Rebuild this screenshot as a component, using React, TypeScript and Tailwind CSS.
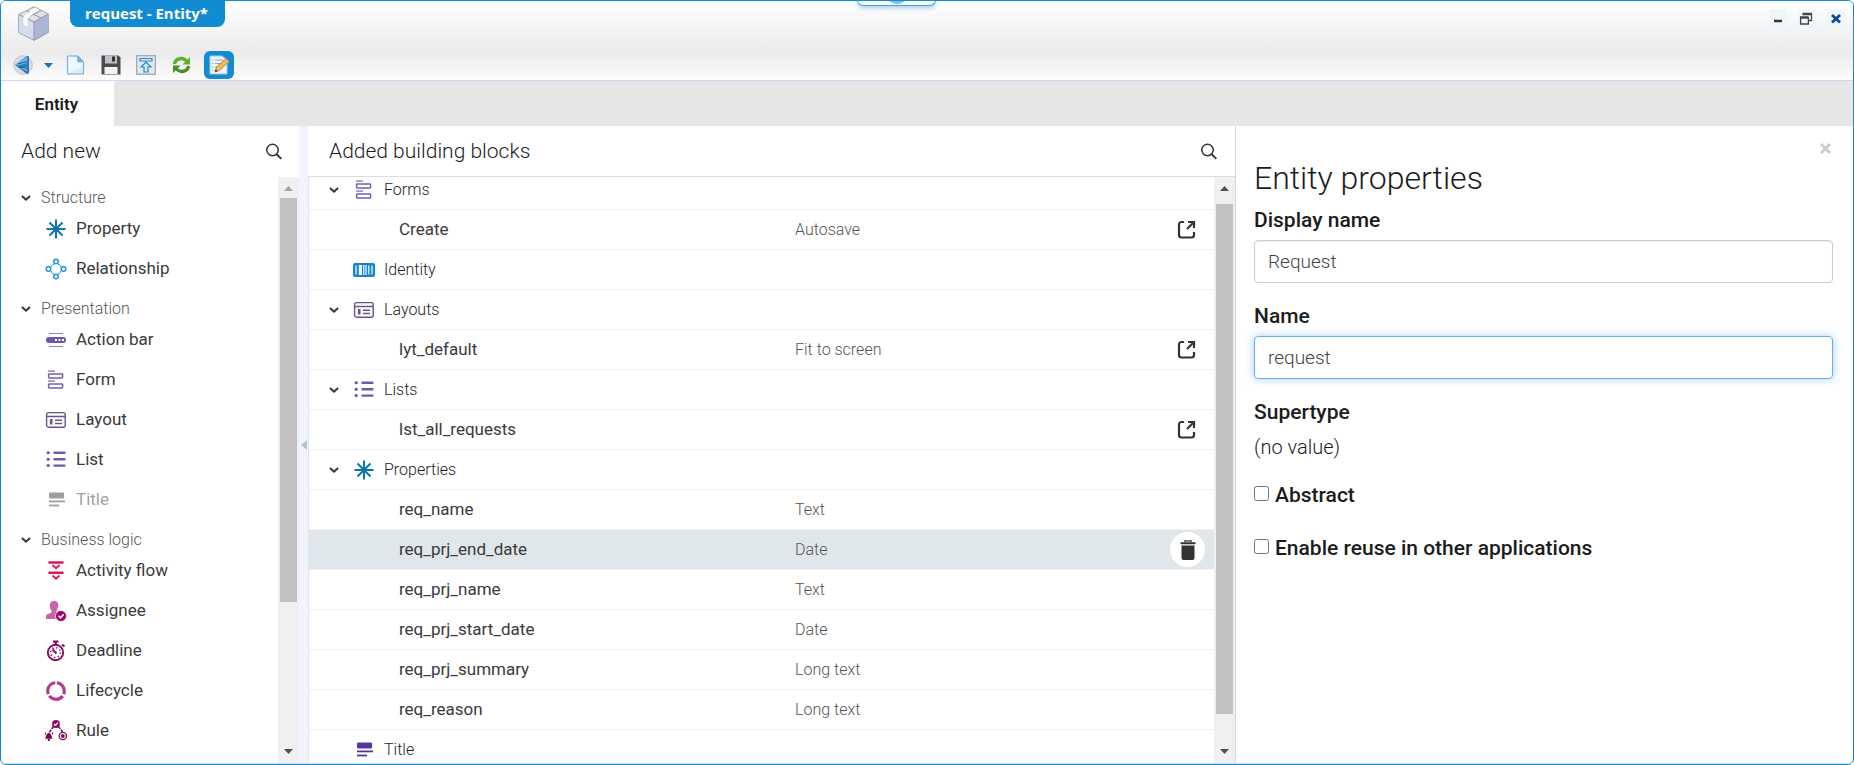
import React, { useState } from "react";

type IconName =
  | "property"
  | "relationship"
  | "actionbar"
  | "form"
  | "layout"
  | "list"
  | "title"
  | "titleMuted"
  | "flow"
  | "assignee"
  | "deadline"
  | "lifecycle"
  | "rule"
  | "identity";

type Block = {
  label: string;
  icon?: IconName;
  open?: boolean;
  detail?: string;
  link?: boolean;
};

const groups: { title: string; items: { label: string; icon: IconName; disabled?: boolean }[] }[] = [
  {
    title: "Structure",
    items: [
      { label: "Property", icon: "property" },
      { label: "Relationship", icon: "relationship" },
    ],
  },
  {
    title: "Presentation",
    items: [
      { label: "Action bar", icon: "actionbar" },
      { label: "Form", icon: "form" },
      { label: "Layout", icon: "layout" },
      { label: "List", icon: "list" },
      { label: "Title", icon: "titleMuted", disabled: true },
    ],
  },
  {
    title: "Business logic",
    items: [
      { label: "Activity flow", icon: "flow" },
      { label: "Assignee", icon: "assignee" },
      { label: "Deadline", icon: "deadline" },
      { label: "Lifecycle", icon: "lifecycle" },
      { label: "Rule", icon: "rule" },
    ],
  },
];

const blocks: Block[] = [
  { label: "Forms", icon: "form", open: true },
  { label: "Create", detail: "Autosave", link: true },
  { label: "Identity", icon: "identity" },
  { label: "Layouts", icon: "layout", open: true },
  { label: "lyt_default", detail: "Fit to screen", link: true },
  { label: "Lists", icon: "list", open: true },
  { label: "lst_all_requests", link: true },
  { label: "Properties", icon: "property", open: true },
  { label: "req_name", detail: "Text" },
  { label: "req_prj_end_date", detail: "Date" },
  { label: "req_prj_name", detail: "Text" },
  { label: "req_prj_start_date", detail: "Date" },
  { label: "req_prj_summary", detail: "Long text" },
  { label: "req_reason", detail: "Long text" },
  { label: "Title", icon: "title" },
];

function BlockIcon({ name }: { name: IconName }) {
  return (
    <svg width="22" height="22" viewBox="0 0 22 22" fill="none" className="shrink-0">
      {name === "property" && (
        <g stroke="#0b76ad" strokeWidth="2">
          <path d="M11 1.5v19M1.5 11h19" />
          <path d="M4.5 4.5l13 13M17.5 4.5l-13 13" />
        </g>
      )}
      {name === "relationship" && (
        <g stroke="#2394d2" strokeWidth="1.5">
          <circle cx="11" cy="3.5" r="2.3" />
          <circle cx="11" cy="18.5" r="2.3" />
          <circle cx="3.5" cy="11" r="2.3" />
          <circle cx="18.5" cy="11" r="2.3" />
          <path d="M6 8.5l2.5-2.5M13.5 6l2.5 2.5M6 13.5l2.5 2.5M13.5 16l2.5-2.5" strokeDasharray="1.3 1" />
        </g>
      )}
      {name === "actionbar" && (
        <g>
          <path d="M4 4.5h14M4 17.5h14" stroke="#9482c4" strokeWidth="1.2" />
          <rect x="1" y="8" width="20" height="6" rx="3" fill="#6d55a7" />
          <path d="M10 10h2v2h-2zM13.5 10h2v2h-2zM17 10h2v2h-2z" fill="#fff" />
        </g>
      )}
      {name === "form" && (
        <g stroke="#7460ae" strokeWidth="1.5">
          <path d="M3 2.2h7M3 12.2h7" stroke="#a294cd" strokeWidth="1.8" />
          <rect x="3.6" y="4.9" width="14" height="4" rx="0.6" />
          <rect x="3.6" y="14.9" width="14" height="4" rx="0.6" />
        </g>
      )}
      {name === "layout" && (
        <g stroke="#66558f" strokeWidth="1.4">
          <rect x="1.6" y="3.6" width="18.6" height="14.6" rx="2" />
          <path d="M1.6 7.5h18.6M10 11.2h7M10 14.5h7" />
          <path d="M6.2 10v5.5" strokeWidth="2.6" />
        </g>
      )}
      {name === "list" && (
        <g stroke="#7059ab" strokeWidth="2.4" strokeLinecap="round">
          <path d="M9.5 3.8h10M9.5 10.2h10M9.5 16.6h10" />
          <path d="M3 3.8h.4M3 10.2h.4M3 16.6h.4" strokeWidth="3" />
        </g>
      )}
      {(name === "title" || name === "titleMuted") && (
        <g fill={name === "title" ? "#55389a" : "#9e9e9e"}>
          <rect x="4" y="3.5" width="15" height="6" rx="1" />
          <rect x="4" y="11.5" width="16" height="1.8" />
          <rect x="4" y="15.6" width="10" height="1.8" />
        </g>
      )}
      {name === "flow" && (
        <g stroke="#e3125d">
          <path d="M4.5 2.5h13M4.500 12.800h13" strokeWidth="2.6" strokeLinecap="round" />
          <path d="M7.500 5l3.500 3.200L14.500 5M7.500 15.500l3.500 3.200L14.500 15.500" strokeWidth="1.800" />
        </g>
      )}
      {name === "assignee" && (
        <g>
          <path
            d="M9 1c3 0 4.600 2 4.300 5-.2 2-1 3.300-1.800 4.200v2l5 2.500V19H1v-2.500c0-2 1.500-2.500 3-3l2.500-1.300v-2C5.500 9.200 4.900 8 4.700 6 4.400 3 6 1 9 1z"
            fill="#c964ab"
          />
          <circle cx="16" cy="16" r="5.500" fill="#96056a" stroke="#fff" strokeWidth="0.8" />
          <path d="M13.500 15.800l2 2 3.200-3.500" stroke="#fff" strokeWidth="1.500" />
        </g>
      )}
      {name === "deadline" && (
        <g stroke="#86085f">
          <circle cx="10.500" cy="12.500" r="7.700" strokeWidth="1.900" />
          <path d="M8 1.500h5.500M10.700 2v3M17 4.500l2.500 2" strokeWidth="2.200" />
          <circle cx="10.500" cy="12.500" r="4.900" strokeWidth="1.500" strokeDasharray="1.300 2.550" />
          <path d="M7.500 9.500l4 4" strokeWidth="2" />
        </g>
      )}
      {name === "lifecycle" && (
        <circle
          cx="11"
          cy="11"
          r="8.300"
          stroke="#b03a8c"
          strokeWidth="3.200"
          strokeDasharray="15.380 2"
          transform="rotate(-84 11 11)"
        />
      )}
      {name === "rule" && (
        <g>
          <path d="M8.500 6.500l-5 7M13.500 6.500l4 5.500" stroke="#86085f" strokeWidth="1.500" strokeDasharray="3 1" />
          <circle cx="11" cy="4" r="3.900" fill="#86085f" />
          <path d="M9 4l1.500 1.500L13 2.700" stroke="#fff" strokeWidth="1.200" />
          <path d="M0 18.800c1.300-1 .5-5.500 3.800-5.800 3.300.3 2.500 4.800 3.800 5.800zM2.800 19h2v2h-2z" fill="#6d0a50" />
          <path d="M.5 12.500v2M7.500 12.500v2" stroke="#86085f" />
          <circle cx="17.800" cy="16" r="3.600" stroke="#86085f" strokeWidth="1.300" />
          <circle cx="17.800" cy="16" r="1.900" fill="#86085f" />
        </g>
      )}
      {name === "identity" && (
        <g>
          <rect x="0" y="4" width="22" height="14" rx="2" fill="#0f86cd" />
          <path d="M3 6.500v9M10.800 6v10M13 6v10M15.800 6.500v9M19 6.500v9" stroke="#fff" strokeWidth="1.200" />
          <path d="M5.800 6h3.200v10H5.800z" fill="#fff" />
        </g>
      )}
    </svg>
  );
}

function Chevron() {
  return (
    <svg width="10" height="10" viewBox="0 0 10 10" className="shrink-0">
      <path d="M1 3l4 3.800L9 3" fill="none" stroke="#333" strokeWidth="1.900" />
    </svg>
  );
}

function SearchButton() {
  return (
    <button aria-label="Search" className="cursor-pointer">
      <svg width="18" height="18" viewBox="0 0 18 18" fill="none" stroke="#333">
        <circle cx="7.500" cy="7" r="5.700" strokeWidth="1.500" />
        <path d="M11.500 11l4.800 4.800" strokeWidth="1.900" />
      </svg>
    </button>
  );
}

function ScrollBar({ muted, gap, size }: { muted?: boolean; gap: string; size: string }) {
  return (
    <div className="flex w-[21px] shrink-0 flex-col items-center bg-[#f0f0f0]">
      <div className={`flex shrink-0 justify-center pt-[9px] ${gap}`}>
        <svg width="9" height="5" viewBox="0 0 9 5">
          <path d="M0 5L4.500 0L9 5z" fill={muted ? "#a3a3a3" : "#505050"} />
        </svg>
      </div>
      <div className={`w-[17px] bg-[#c1c1c1] ${size}`} />
      <div className="mt-auto flex h-6 items-center">
        <svg width="9" height="5" viewBox="0 0 9 5">
          <path d="M0 0h9L4.500 5z" fill="#505050" />
        </svg>
      </div>
    </div>
  );
}

function Header() {
  return (
    <header className="relative h-20 shrink-0 border-b border-[#c6daf0] bg-linear-to-b from-white via-[#ebebeb] via-65% to-[#fcfcfc]">
      <div className="flex h-[47px] items-start">
        <svg width="34" height="38" viewBox="0 0 34 38" className="ml-4 mt-1">
          <path d="M2 9.500L17 2l14 7v18.500L17 35 2 27.500z" fill="#d9dfee" stroke="#7d8494" strokeWidth="1.200" />
          <path d="M2 9.500L17 17v18L2 27.500z" fill="#d5dcf0" />
          <path d="M31 9L17 17v18l14-7.500z" fill="#a9b6d8" />
          <path d="M2 9.500L17 2l14 7-14 8z" fill="#dfe1e6" />
          <path d="M2 9.500L17 17l14-8M17 17v18M9.500 5.800L24 13M24 5.500L9.500 13.200" fill="none" stroke="#8f96a6" />
          <path d="M6.500 11.500l4 2v8l-4-2zM18 2.500l4 2L10.500 13.500l-4-2z" fill="#fff" />
        </svg>
        <h1 className="ml-[19px] h-[26px] rounded-b-lg bg-[#118bd1] pl-[15px] pr-[17px] font-['Open_Sans',sans-serif] text-[15px]/[25px] font-bold text-white">
          request - Entity*
        </h1>
        <div className="ml-auto mr-2 mt-2 flex gap-[11px]">
          <button aria-label="Minimize" className="flex size-[18px] items-center justify-center bg-[#eff7fc]">
            <svg width="18" height="18"><path d="M5 12h8" stroke="#333" strokeWidth="2.500" /></svg>
          </button>
          <button aria-label="Restore" className="flex size-[18px] items-center justify-center bg-[#eff7fc]">
            <svg width="18" height="18" fill="none" stroke="#444">
              <path d="M2 8.500h8.500M4.500 5h9.500" strokeWidth="2.400" />
              <path d="M2.600 8v7h7.800V8M13.500 5v6.500h-3" strokeWidth="1.300" />
            </svg>
          </button>
          <button aria-label="Close" className="flex size-[18px] items-center justify-center bg-[#eff7fc]">
            <svg width="18" height="18"><path d="M5 6l8 7.500M13 6l-8 7.500" stroke="#0c4a91" strokeWidth="2.800" /></svg>
          </button>
        </div>
      </div>
      <div className="absolute left-1/2 -top-px flex h-1.5 w-[79px] -translate-x-[70px] justify-center overflow-hidden rounded-b-md border border-t-0 border-[#3ea6e4] bg-white shadow-[0_2px_5px_#9fcbe9]">
        <div className="-mt-3.5 h-[18px] w-5 shrink-0 rounded-full bg-[#7cc3f3]" />
      </div>
      <Toolbar />
    </header>
  );
}

function Toolbar() {
  return (
    <div className="flex h-[34px] items-center pl-3">
      <button aria-label="Back">
        <svg width="20" height="20" viewBox="0 0 20 20">
          <circle cx="10" cy="10" r="9.300" fill="#d5dce4" stroke="#bdc6cf" />
          <path d="M2 10L14 1l2 .5v17l-2 .5z" fill="#2b7dbc" />
          <path d="M3 9.500L14 2v6L5 10.500zM7 13l7-1v4z" fill="#75bce8" />
          <path d="M5 9l9-2.500M6 12l9 1.500" stroke="#15568f" />
        </svg>
      </button>
      <button aria-label="History" className="ml-[11px]">
        <svg width="9" height="5"><path d="M0 0h9L4.500 5z" fill="#1473b8" /></svg>
      </button>
      <button aria-label="New" className="ml-[13px]">
        <svg width="19" height="20" viewBox="0 0 20 20">
          <path d="M1.500.5h11l6 6v13h-17z" fill="#d6edfc" stroke="#6aa9d6" />
          <path d="M3 2h9v6h5v4L3 18z" fill="#effaff" />
          <path d="M12.500.5v6h6z" fill="#7fb5dc" stroke="#6aa9d6" />
        </svg>
      </button>
      <button aria-label="Save" className="ml-4">
        <svg width="20" height="20" viewBox="0 0 20 20">
          <path d="M.5.500h17l2 2v17H.5z" fill="#4c4c50" />
          <path d="M4 .500h12v8H4z" fill="#bfc2c9" />
          <path d="M11 1.500h3v5h-3z" fill="#333" />
          <path d="M3.500 12h13v7h-13z" fill="#f3f3f3" />
        </svg>
      </button>
      <button aria-label="Publish" className="ml-[15px]">
        <svg width="20" height="20" viewBox="0 0 20 20">
          <rect x=".7" y=".7" width="18.600" height="18.600" fill="#e4e9f0" stroke="#a5adb9" strokeWidth="1.400" />
          <path d="M4 3.500h12v2.500H4zM10 7l5 5h-3v5H8v-5H5z" fill="#cfeafd" stroke="#2b86c4" strokeWidth="1.200" />
        </svg>
      </button>
      <button aria-label="Refresh" className="ml-4">
        <svg width="19" height="18" viewBox="0 0 19 18" fill="none">
          <path d="M2.500 8C3.500 2 11 1 14.500 5" stroke="#5cb02c" strokeWidth="3.400" />
          <path d="M18 1v7.500h-7.500z" fill="#5cb02c" />
          <path d="M16.500 10c-1 6-8.500 7-12 3" stroke="#44921d" strokeWidth="3.400" />
          <path d="M1 17V9.500h7.500z" fill="#44921d" />
        </svg>
      </button>
      <button aria-label="Edit" aria-pressed="true" className="ml-[13px] flex h-7 w-[30px] items-center justify-center rounded-md bg-[#118bd1]">
        <svg width="21" height="20" viewBox="0 0 21 20">
          <path d="M1 1h12l5 4v14H1z" fill="#eaf5fc" stroke="#a4cce8" />
          <path d="M3 5h1.500M6 5h8M3 8.500h1.500M6 8.500h7M3 12h1.500M6 12h4M3 15.500h1.500" stroke="#8eaac2" />
          <path d="M6 17l1.500-5L17 3.500l3.200 3L10.500 15.500z" fill="#f5bd4b" stroke="#9d722b" strokeWidth=".8" />
          <path d="M17 3.500l3.200 3-2 1.800-3.200-3z" fill="#e9a29a" />
          <path d="M6 17l.8-2.500 1.700 1.700z" fill="#333" />
        </svg>
      </button>
    </div>
  );
}

function AddNewPanel() {
  return (
    <aside className="flex w-[298px] shrink-0 flex-col">
      <div className="flex h-[51px] shrink-0 items-center justify-between pl-5 pr-4 pt-px">
        <h2 className="text-[21px]">Add new</h2>
        <SearchButton />
      </div>
      <div className="flex min-h-0 grow">
        <div className="grow overflow-hidden pt-px">
          {groups.map((group) => (
            <section key={group.title}>
              <button className="flex h-[31px] w-full items-center gap-[10px] pl-5 pt-[9px] text-base/5 text-[#555]">
                <Chevron />
                {group.title}
              </button>
              {group.items.map((item) => (
                <button
                  key={item.label}
                  disabled={item.disabled}
                  className={`flex h-10 w-full items-center gap-[9px] pl-11 text-[17px] font-normal ${
                    item.disabled ? "text-[#a3a3a3]" : "text-[#3a3a3a]"
                  }`}
                >
                  <BlockIcon name={item.icon} />
                  {item.label}
                </button>
              ))}
            </section>
          ))}
        </div>
        <ScrollBar muted gap="h-[21px]" size="h-[69%]" />
      </div>
    </aside>
  );
}

function BuildingBlocks() {
  const [selected, setSelected] = useState("req_prj_end_date");

  return (
    <main className="flex min-w-0 flex-[3] flex-col">
      <div className="flex h-[51px] shrink-0 items-center justify-between border-b border-[#dcdcdc] pl-[21px] pr-[17px] pt-px">
        <h2 className="text-[21px]">Added building blocks</h2>
        <SearchButton />
      </div>
      <div className="flex min-h-0 grow overflow-hidden border-l border-[#e4e4e4]">
        <ul className="-mt-[7px] grow">
          {blocks.map((block) => (
            <li
              key={block.label}
              onClick={() => setSelected(block.label)}
              className={`grid h-10 grid-cols-[1fr_365px_54px] items-center border-b border-[#f2f2f2] ${
                selected === block.label ? "bg-[#dfe7ea]" : ""
              }`}
            >
              {block.icon ? (
                <div className="flex items-center pl-5 text-base">
                  <span className="w-6">{block.open && <Chevron />}</span>
                  <BlockIcon name={block.icon} />
                  <span className="ml-[9px]">{block.label}</span>
                </div>
              ) : (
                <span className="pl-[90px] text-[17px] font-normal text-[#3a3a3a]">{block.label}</span>
              )}
              <span className="text-base text-[#555]">{block.detail}</span>
              {block.link && (
                <button aria-label={`Open ${block.label}`} className="ml-[17px]">
                  <svg width="20" height="20" viewBox="0 0 20 20" fill="none" stroke="#333" strokeWidth="2.200">
                    <path d="M7 2H4.500A2.500 2.500 0 0 0 2 4.500v10.500a2.500 2.500 0 0 0 2.500 2.500H14.500a2.500 2.500 0 0 0 2.500-2.500V12" />
                    <path d="M11 2h6v6M16.500 2.500l-6.500 6.500" />
                  </svg>
                </button>
              )}
              {selected === block.label && (
                <button aria-label={`Delete ${block.label}`} className="ml-2.5 flex size-[35px] items-center justify-center rounded-full bg-white">
                  <svg width="16" height="20" viewBox="0 0 16 20">
                    <path d="M5 2.500V.800h6v1.700" fill="none" stroke="#333" strokeWidth="1.300" />
                    <path d="M.5 2.200h15v2H.5zM1.500 5.500h13V18a2 2 0 0 1-2 2h-9a2 2 0 0 1-2-2z" fill="#333" />
                  </svg>
                </button>
              )}
            </li>
          ))}
        </ul>
        <ScrollBar gap="h-[27px]" size="h-[87%]" />
      </div>
    </main>
  );
}

function PropertiesPanel() {
  const [displayName, setDisplayName] = useState("Request");
  const [name, setName] = useState("request");

  return (
    <div className="min-w-0 flex-[2]">
      <section className="flex h-full flex-col border-l border-[#cddbe1] pl-[18px] pr-5">
        <button aria-label="Close panel" className="ml-auto mt-4 h-3">
          <svg width="14" height="14" viewBox="0 0 14 14">
            <path d="M2 2l9 9M11 2l-9 9" stroke="#ccc" strokeWidth="3" />
          </svg>
        </button>
        <h2 className="mt-1.5 text-[32px]/9">Entity properties</h2>
        <label htmlFor="display-name" className="mt-3 text-[21px]/6 font-medium">
          Display name
        </label>
        <input
          id="display-name"
          value={displayName}
          onChange={(e) => setDisplayName(e.target.value)}
          className="mt-2 h-[43px] rounded-sm border border-[#ccc] px-[13px] text-[19px] text-[#444] shadow-[inset_0_1px_1px_#00000013] outline-none"
        />
        <label htmlFor="name" className="mt-[21px] text-[21px]/6 font-medium">
          Name
        </label>
        <input
          id="name"
          autoFocus
          value={name}
          onChange={(e) => setName(e.target.value)}
          className="mt-2 h-[43px] rounded-sm border border-[#66afe9] px-[13px] text-[19px] text-[#444] shadow-[0_0_8px_#66afe999] outline-none"
        />
        <h3 className="mt-[21px] text-[21px]/6 font-medium">Supertype</h3>
        <p className="mt-[11px] text-xl/6">(no value)</p>
        <label className="mt-6 flex items-start gap-1.5 text-[21px]/6 font-medium">
          <input type="checkbox" className="mt-[3px] size-[15px]" />
          Abstract
        </label>
        <label className="mt-[29px] flex items-start gap-1.5 text-[21px]/6 font-medium">
          <input type="checkbox" className="mt-[3px] size-[15px]" />
          Enable reuse in other applications
        </label>
      </section>
    </div>
  );
}

export default function App() {
  return (
    <div className="flex h-screen flex-col overflow-hidden rounded-md border border-[#118bd1] bg-white font-[Roboto,sans-serif] font-light text-[#1c1c1c]">
      <Header />
      <nav className="flex h-[45px] shrink-0 bg-[#e6e6e6]">
        <button className="w-[113px] bg-white pr-0.5 pt-0.5 text-[17px] font-semibold">Entity</button>
      </nav>
      <div className="flex min-h-0 grow border-b border-[#dcdcdc]">
        <AddNewPanel />
        <button aria-label="Collapse panel" className="flex w-[9px] shrink-0 items-center justify-center bg-[#f0f4fd]">
          <svg width="6" height="10"><path d="M6 0v10L0 5z" fill="#b4c3cd" /></svg>
        </button>
        <BuildingBlocks />
        <PropertiesPanel />
      </div>
    </div>
  );
}
